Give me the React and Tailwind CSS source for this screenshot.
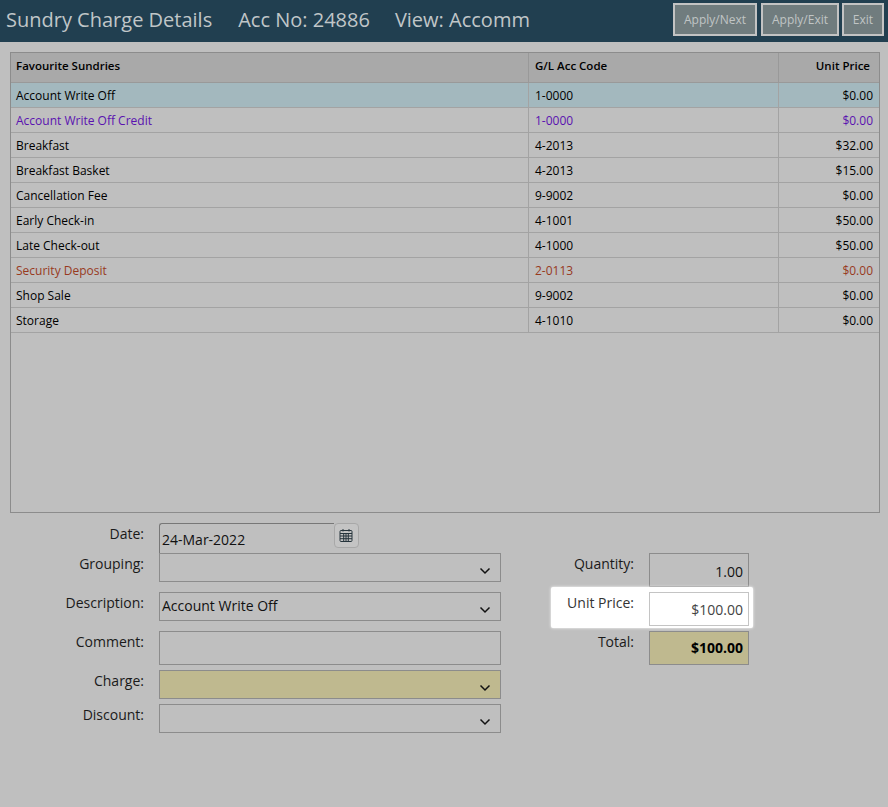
const rows = [
  { name: 'Account Write Off', code: '1-0000', price: '$0.00', cls: 'bg-[#a3b8be] text-black' },
  { name: 'Account Write Off Credit', code: '1-0000', price: '$0.00', cls: 'text-[#5a12b0]' },
  { name: 'Breakfast', code: '4-2013', price: '$32.00', cls: 'text-black' },
  { name: 'Breakfast Basket', code: '4-2013', price: '$15.00', cls: 'text-black' },
  { name: 'Cancellation Fee', code: '9-9002', price: '$0.00', cls: 'text-black' },
  { name: 'Early Check-in', code: '4-1001', price: '$50.00', cls: 'text-black' },
  { name: 'Late Check-out', code: '4-1000', price: '$50.00', cls: 'text-black' },
  { name: 'Security Deposit', code: '2-0113', price: '$0.00', cls: 'text-[#983a1e]' },
  { name: 'Shop Sale', code: '9-9002', price: '$0.00', cls: 'text-black' },
  { name: 'Storage', code: '4-1010', price: '$0.00', cls: 'text-black' },
];

const Chevron = () => (
  <svg className="absolute right-[9px] bottom-[6px]" width="12" height="8" viewBox="0 0 12 8" fill="none">
    <path d="M1.5 1.5 6 6l4.5-4.5" stroke="#111" strokeWidth="1.5" />
  </svg>
);

const SelectBox = ({ value, className = '' }) => (
  <div className={`relative h-full w-[342px] border border-[#8c8c8c] pl-[2px] pt-[3px] text-[14px] leading-[20px] text-[#111] ${className}`}>
    {value}
    <Chevron />
  </div>
);

const Label = ({ children, className = '' }) => (
  <div className={`w-[144px] text-right text-[14px] leading-[20px] text-[#1a1a1a] ${className}`}>{children}</div>
);

const HeaderButton = ({ children, width }) => (
  <button className={`flex h-[33px] items-center justify-center border-2 border-[#c3c3c3] bg-[#707c7e] text-[12px] text-[#c0c5c5] ${width}`}>
    {children}
  </button>
);

export default function App() {
  return (
    <div className="h-[807px] w-[888px] overflow-hidden bg-[#bfbfbf] font-['Open_Sans',sans-serif]">
      <div className="flex h-[42px] items-start justify-between bg-[#213f50] pl-[6px] pr-[4px] pt-[3px]">
        <div className="flex pt-[3px] text-[20px] leading-[28px] text-[#c0c6c8]">
          <span>Sundry Charge Details</span>
          <span className="ml-[26px]">Acc No: 24886</span>
          <span className="ml-[25px]">View: Accomm</span>
        </div>
        <div className="flex">
          <HeaderButton width="w-[84px]">Apply/Next</HeaderButton>
          <div className="w-[4px]" />
          <HeaderButton width="w-[78px]">Apply/Exit</HeaderButton>
          <div className="w-[3px]" />
          <HeaderButton width="w-[42px]">Exit</HeaderButton>
        </div>
      </div>

      <div className="mx-[10px] mt-[10px] h-[461px] w-[870px] border border-[#8c8c8c]">
        <div className="flex h-[30px] border-b border-[#999] bg-[#a9a9a9] text-[11.5px] font-semibold text-black">
          <div className="flex h-[29px] w-[518px] items-center border-r border-[#999] pb-[4px] pl-[5px]">Favourite Sundries</div>
          <div className="flex h-[29px] w-[250px] items-center border-r border-[#999] pb-[4px] pl-[6px]">G/L Acc Code</div>
          <div className="flex h-[29px] flex-1 items-center justify-end pb-[4px] pr-[9px]">Unit Price</div>
        </div>
        {rows.map((r) => (
          <div key={r.name} className={`flex h-[25px] items-center border-b border-[#a3a3a3] text-[12px] ${r.cls}`}>
            <div className="flex h-full w-[518px] items-center border-r border-[#a3a3a3] pl-[5px] pt-[2px]">{r.name}</div>
            <div className="flex h-full w-[250px] items-center border-r border-[#a3a3a3] pl-[6px] pt-[2px]">{r.code}</div>
            <div className="flex-1 pr-[6px] pt-[2px] text-right">{r.price}</div>
          </div>
        ))}
      </div>

      <div className="mt-[10px] flex">
        {/* left column */}
        <div className="flex w-[551px] flex-col">
          <div className="flex h-[30px] gap-[15px]">
            <Label className="pt-[1px]">Date:</Label>
            <div className="relative h-[30px] w-[175px] rounded-tl-[3px] border-t border-l border-[#777] pl-[2px] pt-[6px] text-[14px] leading-[20px] text-[#111]">
              24-Mar-2022
              <div className="absolute left-[174px] top-[-1px] flex h-[25px] w-[25px] items-center justify-center rounded-[4px] border border-[#a8a8a8] bg-[#c4c4c4] pr-[2px]">
                <svg width="14" height="15" viewBox="0 0 14 15" fill="none" stroke="#26343c" strokeWidth="1">
                  <rect x="1" y="2.5" width="12" height="11" rx="1" />
                  <path d="M1 5.5h12M1 8h12M1 10.7h12M4.7 5.5v8M7 5.5v8M9.3 5.5v8M4 1v2.5M10 1v2.5" />
                </svg>
              </div>
            </div>
          </div>
          <div className="flex h-[29px] gap-[15px]">
            <Label className="pt-[1px]">Grouping:</Label>
            <SelectBox value="" />
          </div>
          <div className="mt-[10px] flex h-[29px] gap-[15px]">
            <Label className="pt-[1px]">Description:</Label>
            <SelectBox value="Account Write Off" />
          </div>
          <div className="mt-[10px] flex h-[34px] gap-[15px]">
            <Label className="pt-[1px]">Comment:</Label>
            <div className="w-[342px] border border-[#8c8c8c]" />
          </div>
          <div className="mt-[5px] flex h-[29px] gap-[15px]">
            <Label className="pt-[1px]">Charge:</Label>
            <SelectBox value="" className="bg-[#bfb98f]" />
          </div>
          <div className="mt-[5px] flex h-[29px] gap-[15px]">
            <Label className="pt-[1px]">Discount:</Label>
            <SelectBox value="" />
          </div>
        </div>

        {/* right column */}
        <div className="flex w-[202px] flex-col pt-[30px]">
          <div className="flex h-[34px]">
            <div className="w-[83px] pt-[1px] text-right text-[14px] leading-[20px] text-[#1a1a1a]">Quantity:</div>
            <div className="ml-[15px] w-[100px] border border-[#8c8c8c] pr-[5px] pt-[8px] text-right text-[14px] leading-[20px] text-[#111]">1.00</div>
          </div>
          <div className="flex h-[41px] w-[202px] rounded-[2px] bg-white pt-[5px] shadow-[0_0_3px_#fff]">
            <div className="w-[83px] pt-[1px] text-right text-[14px] leading-[20px] text-[#333]">Unit Price:</div>
            <div className="ml-[15px] h-[34px] w-[100px] border border-[#c4c4c4] pr-[5px] pt-[7px] text-right text-[14px] leading-[20px] text-[#444]">$100.00</div>
          </div>
          <div className="mt-[3px] flex h-[34px]">
            <div className="w-[83px] pt-[1px] text-right text-[14px] leading-[20px] text-[#1a1a1a]">Total:</div>
            <div className="ml-[15px] w-[100px] border border-[#8c8c8c] bg-[#bfb98f] pr-[5px] pt-[6px] text-right text-[14px] font-bold leading-[20px] text-black">$100.00</div>
          </div>
        </div>
      </div>
    </div>
  );
}
